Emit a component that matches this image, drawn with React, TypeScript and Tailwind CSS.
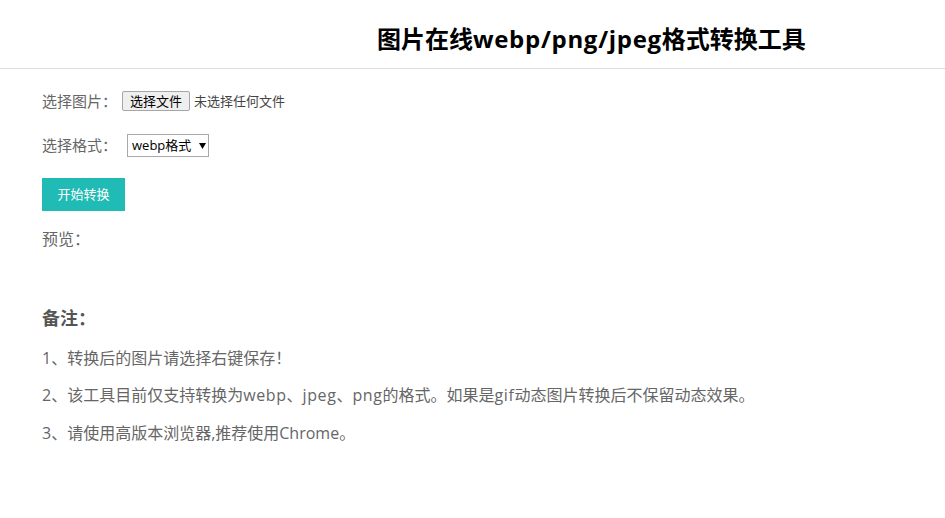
import React from "react";

const font = { fontFamily: '"Open Sans", "Noto Sans CJK SC", sans-serif' };

function L({ children }: { children: React.ReactNode }) {
  return <span className="tracking-[0.6px]">{children}</span>;
}

export default function App() {
  return (
    <div className="min-h-[518px] w-full bg-white" style={font}>
      <header className="h-[69px] border-b border-[#dddddd] pl-[377px] pt-[21px]">
        <h1 className="text-[24px] font-bold leading-[36px] text-black">
          图片在线<span className="tracking-[0.7px]">webp/png/jpeg</span>格式转换工具
        </h1>
      </header>
      <main className="flex flex-col items-start pl-[42px] text-[15px] text-[#666666]">
        <div className="mt-[22px] flex h-[20px] items-center">
          <span className="leading-[20px]">选择图片：</span>
          <button className="ml-[5px] h-[20px] rounded-[2px] border border-[#a6a6a6] bg-[#efefef] px-[7px] text-[13px] leading-[18px] text-black">
            选择文件
          </button>
          <span className="ml-[4px] text-[13px] leading-[20px] text-[#444444]">未选择任何文件</span>
        </div>
        <div className="mt-[23px] flex h-[23px] items-center">
          <span className="leading-[23px]">选择格式：</span>
          <div className="ml-[10px] flex h-[23px] w-[82px] items-center border border-[#a9a9a9] bg-white pl-[4px] text-[13px] text-black">
            <span className="leading-[21px]">webp格式</span>
            <svg className="ml-[8px]" width="7" height="6" viewBox="0 0 7 6">
              <path d="M0 0 L7 0 L3.5 6 Z" fill="#000" />
            </svg>
          </div>
        </div>
        <button className="mt-[21px] h-[33px] w-[83px] bg-[#20bbb4] text-[13px] text-white">
          开始转换
        </button>
        <div className="mt-[18px] text-[16px] leading-[20px]">预览：</div>
        <div className="mt-[57px] text-[18px] font-bold leading-[24px] text-[#555555]">备注：</div>
        <div className="text-[16px]">
          <p className="mt-[17px] leading-[22px]">1、转换后的图片请选择右键保存！</p>
          <p className="mt-[15px] leading-[22px]">
            2、该工具目前仅支持转换为<L>webp</L>、<L>jpeg</L>、<L>png</L>的格式。如果是<L>gif</L>动态图片转换后不保留动态效果。
          </p>
          <p className="mt-[16px] leading-[22px]">3、请使用高版本浏览器,推荐使用Chrome。</p>
        </div>
      </main>
    </div>
  );
}
